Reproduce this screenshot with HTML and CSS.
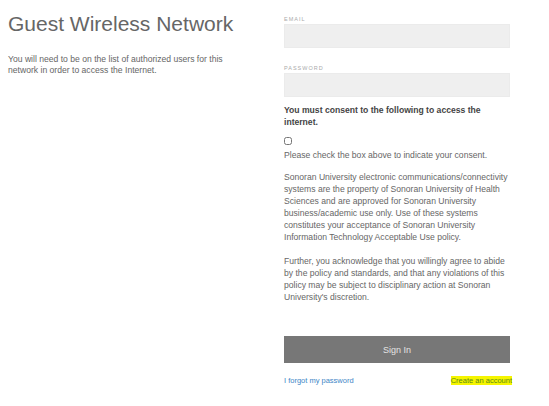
FILE: index.html
```html
<!DOCTYPE html>
<html lang="en">
<head>
    <meta charset="UTF-8" />
    <meta name="viewport" content="width=device-width, initial-scale=1.0" />
    <title>Guest Wireless Network</title>
    <link rel="stylesheet" href="styles.css">
</head>
<body>
    <div class="page">
        <div class="intro">
            <h1>Guest Wireless Network</h1>
            <p>You will need to be on the list of authorized users for this network in order to access the Internet.</p>
        </div>

        <form class="signin" onsubmit="event.preventDefault();" autocomplete="off">
            <label class="field-label" for="email">Email</label>
            <input class="field" type="text" id="email" name="email" />

            <label class="field-label" for="password">Password</label>
            <input class="field" type="password" id="password" name="password" />

            <p class="consent-title">You must consent to the following to access the internet.</p>
            <input class="consent-box" type="checkbox" id="consent" />
            <p class="hint">Please check the box above to indicate your consent.</p>

            <p class="terms">Sonoran University electronic communications/connectivity systems are the property of Sonoran University of Health Sciences and are approved for Sonoran University business/academic use only. Use of these systems constitutes your acceptance of Sonoran University Information Technology Acceptable Use policy.</p>
            <p class="terms">Further, you acknowledge that you willingly agree to abide by the policy and standards, and that any violations of this policy may be subject to disciplinary action at Sonoran University's discretion.</p>

            <button class="btn-signin" type="submit">Sign In</button>

            <div class="links">
                <a href="#">I forgot my password</a>
                <a href="#" class="highlight">Create an account</a>
            </div>
        </form>
    </div>
</body>
</html>
```

FILE: styles.css
```css
body {
    font-family: "Liberation Sans", Arial, Helvetica, sans-serif;
    margin: 0;
    background: #fff;
    color: #666;
}

html {
    box-sizing: border-box;
}

*, *:before, *:after {
    box-sizing: inherit;
}

.page {
    display: flex;
    padding: 12px 0 0 8px;
}

.intro {
    width: 276px;
}

h1 {
    font-size: 21px;
    font-weight: normal;
    line-height: 24px;
    color: #666;
    margin: 0;
}

.intro p {
    font-size: 8.6px;
    line-height: 11px;
    margin: 18px 0 0;
    width: 222px;
}

.signin {
    width: 226px;
    display: flex;
    flex-direction: column;
    padding-top: 3px;
}

.field-label {
    font-size: 5.5px;
    letter-spacing: 1px;
    text-transform: uppercase;
    color: #aaa;
    line-height: 8px;
}

.field {
    height: 24px;
    border: 1px solid #ebebeb;
    background: #efefef;
    margin: 1px 0 16px;
    padding: 0 6px;
}

.consent-title {
    font-size: 8.6px;
    font-weight: bold;
    line-height: 11.5px;
    color: #444;
    margin: -8px 0 0;
}

.consent-box {
    width: 8px;
    height: 8px;
    margin: 9px 0 0;
}

.hint,
.terms {
    font-size: 8.6px;
    line-height: 12px;
    color: #666;
    margin: 4px 0 0;
}

.hint + .terms {
    margin-top: 10px;
}

.terms + .terms {
    margin-top: 12px;
}

.btn-signin {
    height: 27px;
    margin-top: 33px;
    border: none;
    background: #777;
    color: #e4e4e4;
    font-family: inherit;
    font-size: 9px;
    cursor: pointer;
}

.links {
    display: flex;
    justify-content: space-between;
    margin-top: 13px;
    font-size: 7.5px;
}

.links a {
    color: #3d86c6;
    text-decoration: none;
}

.links a.highlight {
    background: #f5f500;
    color: #5c8a14;
    margin-right: -2px;
}
```
